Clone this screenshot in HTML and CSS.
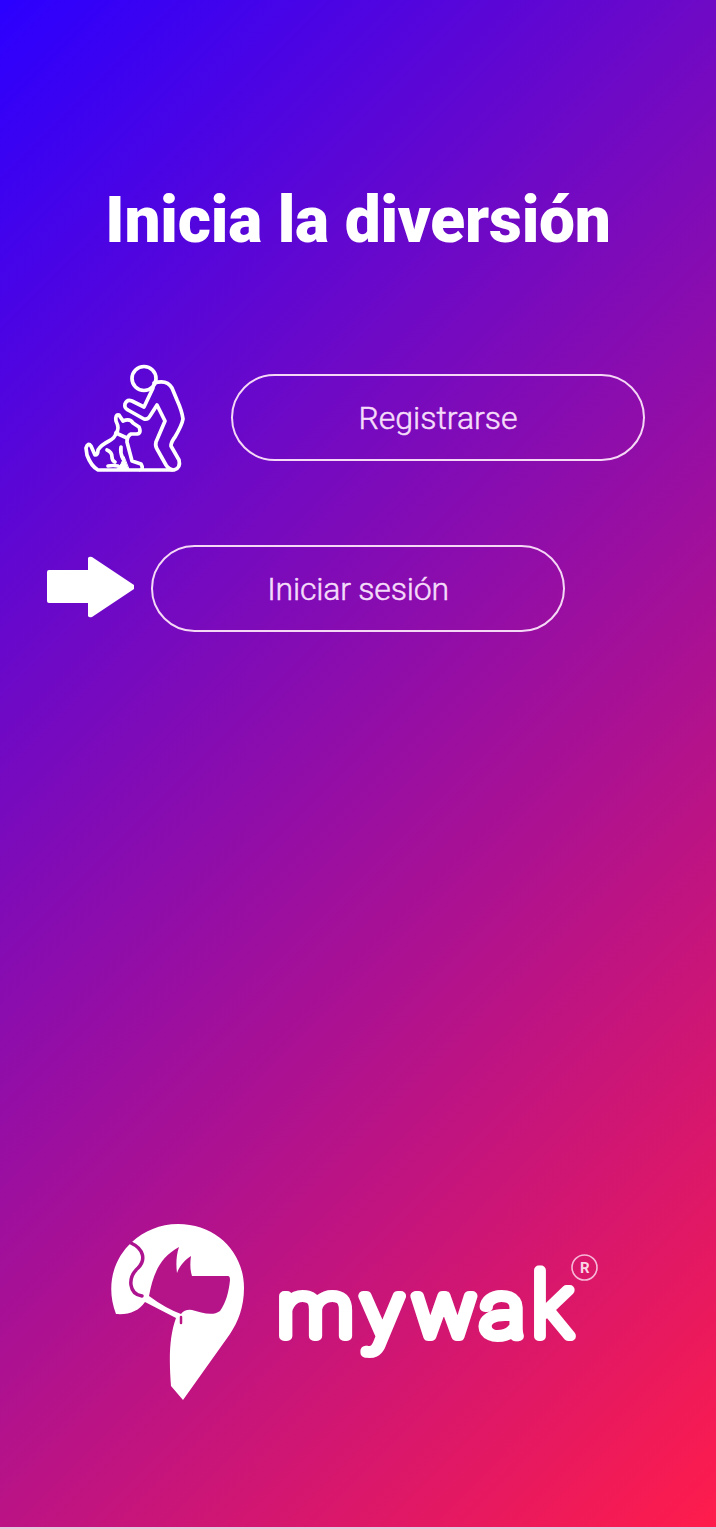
FILE: index.html
```html
<!DOCTYPE html>
<html lang="es">
<head>
<meta charset="utf-8">
<title>mywak</title>
<link rel="stylesheet" href="styles.css">
</head>
<body>
<main class="screen">
  <h1 class="title">Inicia la diversión</h1>
  <div class="row row-register">
    <svg class="walker" viewBox="75 355 120 125" width="120" height="125">
      <circle cx="144" cy="378.500" r="12"/>
      <path d="M153 388L144 407L132 401Q127 399 125 404Q124 408 128 410L144 419Q148 420 150 416L157 405L165 421L156 442Q155 446 157 449L166 465Q169 470 174 470Q181 468 179 460L171 446Q171 442 175 437Q182 425 183 419Q182 411 177 400L172 388Q167 379 154 383"/>
      <path d="M172 470H98Q91 466 87 455L86 448Q88 442 91 446L95 455Q98 455 98 450Q101 445 109 441Q115 438 116 433Q120 429 116 421Q115 414 119 415L123 421Q130 418 133 423L139 427Q142 434 136 434H131Q127 436 127 442L132 461L141 464Q144 469 140 470"/>
      <path d="M116 433L127 438M121 447Q120 453 123 459M107 450Q112 452 112 457Q112 461 115 462M108 466Q113 465 118 466"/>
      <path class="paw" d="M124 457L121 464L116 470H129Z"/>
    </svg>
    <button class="pill">Registrarse</button>
  </div>
  <div class="row row-login">
    <svg class="arrow" viewBox="0 0 88 62" width="88" height="62"><path d="M2 14H41V2Q42 0 45 1L87 29V33L45 61Q42 62 41 60V47H2Q0 47 0 45V16Q0 14 2 14Z"/></svg>
    <button class="pill pill-login">Iniciar sesión</button>
  </div>
  <svg class="brand" viewBox="100 1215 510 195" width="510" height="195">
    <path d="M132 1242C144 1231 160 1224 178 1224C216 1224 244 1252 244 1288C244 1307 238 1322 230 1334L183 1400L171 1386C169 1360 169 1337 176 1318L145 1302C139 1311 129 1315 116 1314C106 1288 112 1260 132 1242Z"/>
    <path class="cut" d="M149 1296C153 1275 159 1258 179 1247C176 1256 176 1265 177 1273C180 1265 185 1260 191 1256C190 1263 190 1270 192 1276H228Q230 1276 230 1280C229 1291 226 1303 220 1311C212 1317 201 1312 192 1310Q185 1309 181 1314Q165 1308 149 1296Z"/>
    <path class="leash-gap" d="M131 1243C144 1249 146 1260 138 1268C127 1278 129 1294 142 1296"/>
    <path class="tag" d="M181 1317V1323"/>
    <text class="wordmark" transform="scale(1.1 1)" y="1336" x="252.700 329 375 436.500">mywa</text>
    <text class="wordmark tall" transform="scale(0.96 1)" x="554" y="1336">k</text>
    <circle class="mark-ring" cx="584.500" cy="1267.500" r="12.500"/>
    <text class="mark" x="584.700" y="1273">R</text>
  </svg>
</main>
</body>
</html>
```
FILE: styles.css
```css
* { box-sizing: border-box; }
body { margin: 0; background: #e6c8de; font-family: Roboto, sans-serif; }
.screen {
  height: 1527px;
  padding-top: 182px;
  display: flex;
  flex-direction: column;
  background: linear-gradient(135deg, #2b00ff, #ff1c4b);
}
.title {
  margin: 0;
  height: 78px;
  line-height: 78px;
  font-size: 64px;
  font-weight: 900;
  letter-spacing: -0.2px;
  text-align: center;
  color: #fff;
  white-space: nowrap;
}
.row { display: flex; }
.row-register { margin-top: 95px; padding-left: 75px; gap: 36px; height: 125px; }
.row-register .pill { margin-top: 19px; }
.row-login { margin-top: 65px; padding-left: 47px; gap: 16px; height: 87px; }
.pill {
  width: 414px;
  height: 87px;
  padding: 0;
  border: 2px solid #f5d7f6;
  border-radius: 44px;
  background: none;
  color: #f5dcfa;
  font: 300 32px Roboto, sans-serif;
  letter-spacing: 0;
  -webkit-text-stroke: 0.5px #f5dcfa;
}
.pill-login { letter-spacing: -0.2px; }
.walker { fill: none; stroke: #fff; stroke-width: 3.7; stroke-linecap: round; stroke-linejoin: round; }
.paw { fill: #fff; stroke-width: 1; }
.arrow { margin-top: 11px; fill: #fff; }
.brand { margin: 583px 0 0 100px; fill: #fff; }
.cut { fill: #b51489; }
.leash-gap { fill: none; stroke: #ad138f; stroke-width: 3.5; stroke-linecap: round; }
.tag { stroke: #bb1483; stroke-width: 2.5; stroke-linecap: round; }
.wordmark {
  font: 100 76px Roboto, sans-serif;
  stroke: #fff;
  stroke-width: 10;
  stroke-linejoin: round;
}
.tall { font-size: 88px; }
.mark-ring { fill: none; stroke: #f7b7d7; stroke-width: 1.6; }
.mark { font: 700 15px Roboto, sans-serif; text-anchor: middle; fill: #fbd4e6; }
```
